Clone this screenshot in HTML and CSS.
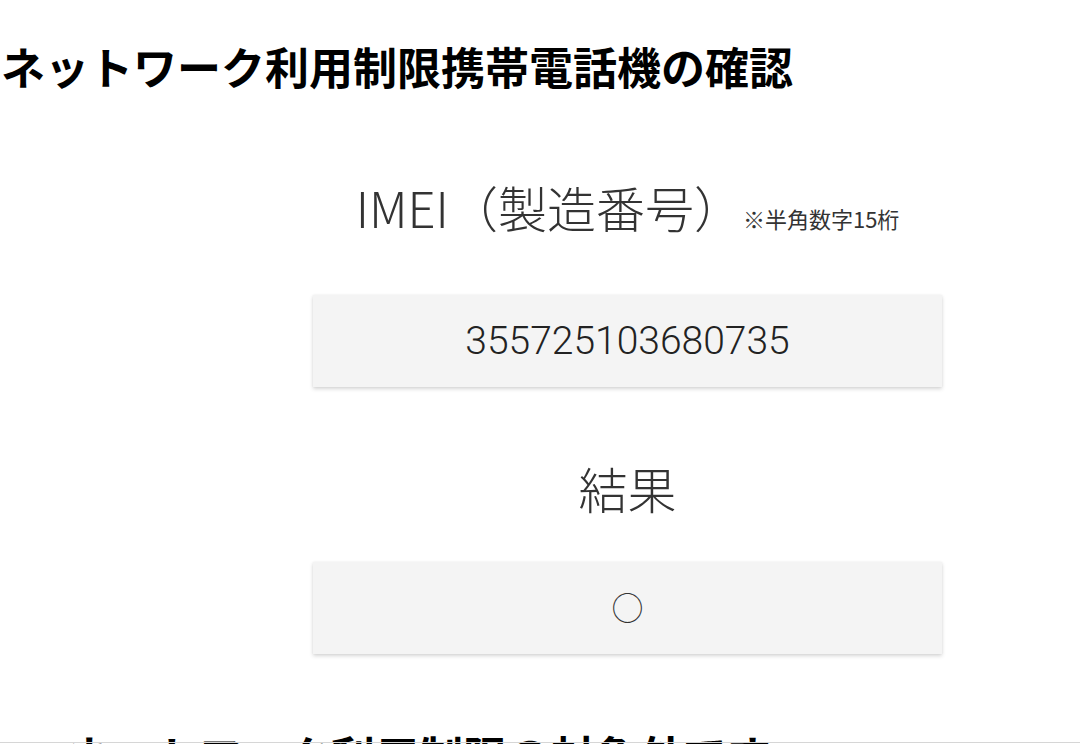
FILE: index.html
```html
<!DOCTYPE html>
<html lang="ja">
<head>
<meta charset="utf-8">
<title>ネットワーク利用制限携帯電話機の確認</title>
<link rel="stylesheet" href="styles.css">
</head>
<body>
<h1 class="title">ネットワーク利用制限携帯電話機の確認</h1>
<main class="panel">
  <div class="label-row">
    <span class="label">IMEI（製造番号）</span><span class="note">※半角数字15桁</span>
  </div>
  <div class="box first">355725103680735</div>
  <div class="label-row result-label">
    <span class="label">結果</span>
  </div>
  <div class="box second"><span class="mark">○</span></div>
</main>
<p class="footer-text">ネットワーク利用制限の対象外です。</p>
<div class="edge-line"></div>
</body>
</html>
```

FILE: styles.css
```css
html, body {
  margin: 0;
  padding: 0;
  background: #ffffff;
  overflow: hidden;
}
body {
  font-family: "Noto Sans CJK JP", "Noto Sans", sans-serif;
  color: #000;
}
.title {
  margin: 40px 0 0 1px;
  font-size: 44px;
  line-height: 52px;
  font-weight: 700;
  color: #000;
  white-space: nowrap;
}
.panel {
  margin-left: 313px;
  width: 629px;
  display: flex;
  flex-direction: column;
}
.label-row {
  margin-top: 87px;
  display: flex;
  justify-content: center;
  align-items: baseline;
  white-space: nowrap;
}
.label {
  font-family: "Noto Sans CJK JP", sans-serif;
  font-size: 49px;
  line-height: 56px;
  font-weight: 300;
  color: #333;
}
.note {
  font-size: 22px;
  color: #333;
  margin-left: 0;
}
.box {
  height: 92px;
  background: #f4f4f4;
  box-shadow: 0 2px 4px rgba(0, 0, 0, 0.16), 0 0 2px rgba(0, 0, 0, 0.06);
  display: flex;
  align-items: center;
  justify-content: center;
  font-family: Roboto, "Noto Sans CJK JP", sans-serif;
  font-size: 39px;
  font-weight: 300;
  color: #222;
}
.first {
  margin-top: 60px;
}
.result-label {
  margin-top: 73px;
}
.second {
  margin-top: 46px;
}
.mark {
  font-family: "Noto Sans CJK JP", sans-serif;
  font-size: 32px;
  font-weight: 300;
  color: #333;
  position: relative;
  top: -2px;
}
.footer-text {
  margin: 75px 0 0 67px;
  font-size: 44px;
  line-height: 52px;
  font-weight: 700;
  white-space: nowrap;
}
.edge-line {
  position: fixed;
  left: 0;
  right: 0;
  bottom: 1px;
  height: 1px;
  background: #d6d6d6;
}
```
